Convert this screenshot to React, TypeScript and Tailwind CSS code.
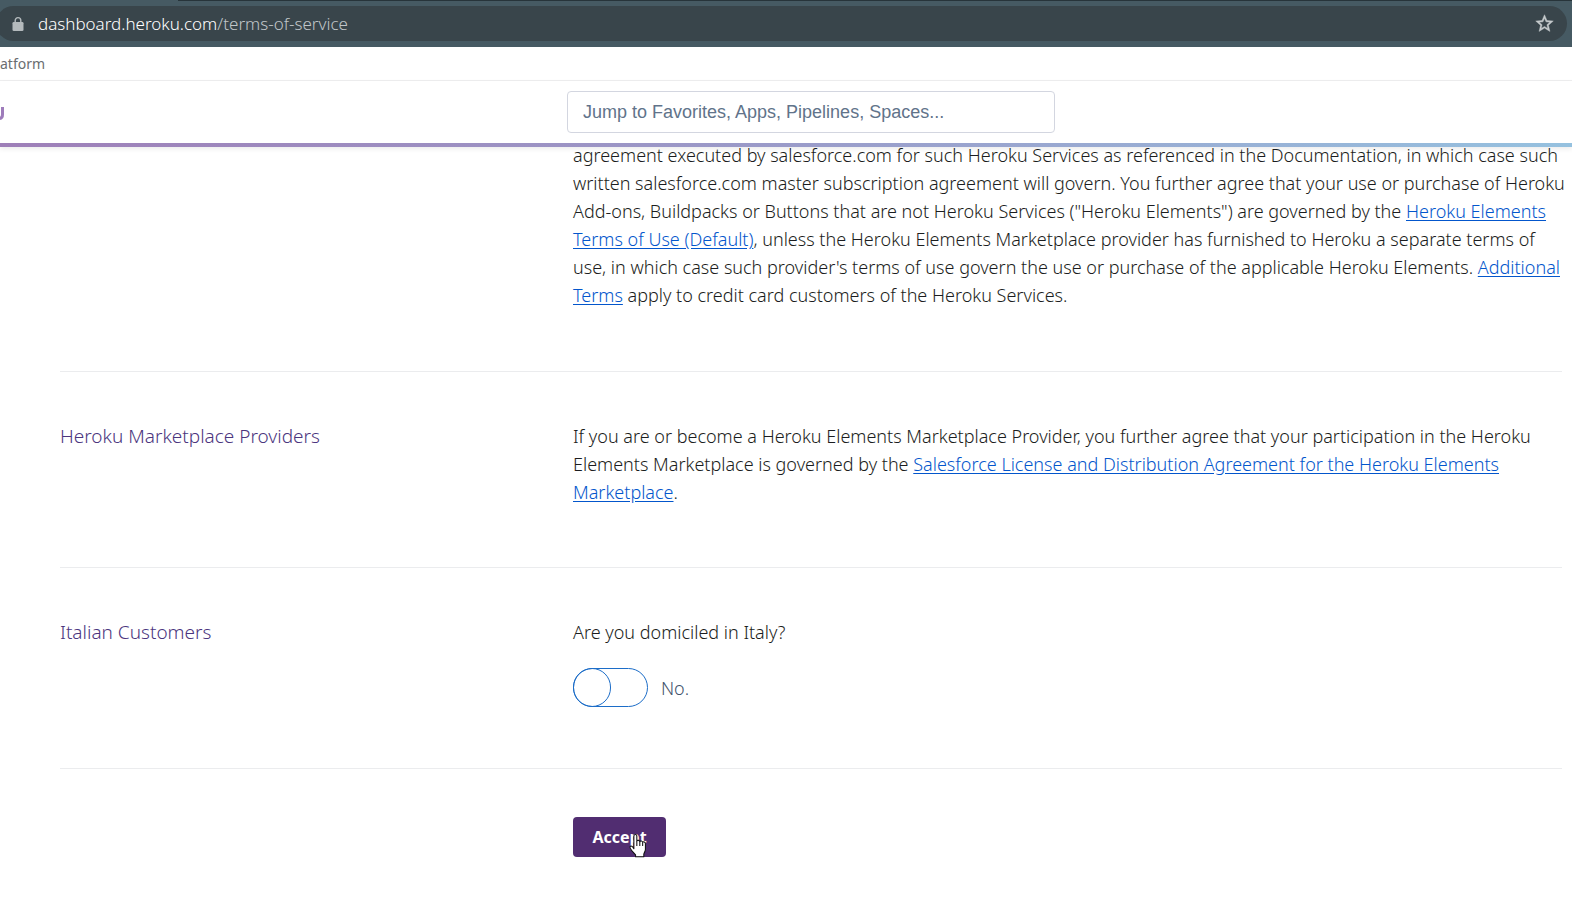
import { useState, type ReactNode } from "react";

function LockIcon() {
  return (
    <svg width="12" height="16" viewBox="0 0 12 16" aria-hidden="true" className="shrink-0">
      <path d="M3.2 6.5V4.4a2.8 2.8 0 0 1 5.6 0V6.5" fill="none" stroke="#b4babd" strokeWidth="1.4" />
      <rect x="0.5" y="6" width="11" height="9" rx="1.3" fill="#b4babd" />
    </svg>
  );
}

function StarIcon() {
  return (
    <svg width="21" height="21" viewBox="0 0 24 24" aria-hidden="true">
      <path
        d="M22 9.24l-7.19-.62L12 2 9.19 8.63 2 9.24l5.46 4.73L5.82 21 12 17.27 18.18 21l-1.63-7.03L22 9.24zM12 15.4l-3.76 2.27 1-4.28-3.32-2.88 4.38-.38L12 6.1l1.71 4.04 4.38.38-3.32 2.88 1 4.28L12 15.4z"
        fill="#c5cacc"
        stroke="#c5cacc"
        strokeWidth="0.5"
      />
    </svg>
  );
}

function HandCursor() {
  return (
    <svg
      width="18"
      height="25"
      viewBox="0 0 17 23"
      aria-hidden="true"
      className="pointer-events-none absolute top-4 left-14"
    >
      <path
        d="M4.6 14.6V2.6C4.6.5 7.4.5 7.4 2.6V7.4c.4-1.2 2.6-1 2.8.5.5-1.1 2.5-.8 2.7.7.6-1 2.6-.6 2.6 1.2v5.4c0 1.8-1.5 3.2-1.5 4.6v2.4H6.2v-1.9L2.6 16.3C1.3 14.6.5 13.5 1 12.6c.7-1.2 2.4-.5 3.6 2z"
        fill="#fff"
        stroke="#111"
        strokeWidth="1"
        strokeLinejoin="round"
      />
      <path d="M7.4 7.4v4.6M10.2 8v4M12.9 8.8V12" fill="none" stroke="#111" strokeWidth="1" />
    </svg>
  );
}

function TextLink({ children }: { children: ReactNode }) {
  return (
    <a href="#" className="text-[#0356cc] underline underline-offset-2">
      {children}
    </a>
  );
}

function Section({ title, children }: { title?: string; children: ReactNode }) {
  return (
    <section className="grid grid-cols-[513px_minmax(0,1fr)] border-b border-[#ebecee] pt-[50px] pb-[61px]">
      <h2 className="text-[19px] leading-7 text-[#4b357e]">{title}</h2>
      <div className="text-lg leading-7 whitespace-nowrap">{children}</div>
    </section>
  );
}

export default function App() {
  const [italy, setItaly] = useState(false);
  return (
    <div className="min-h-screen overflow-hidden bg-white font-['Noto_Sans',sans-serif] font-light text-[#1b1d20]">
      <div className="flex h-[47px] flex-col bg-[#465a63]">
        <div className="ml-[178px] h-px bg-[#27343a]" />
        <div className="mt-[5px] mr-[5px] -ml-1 flex h-[35px] items-center rounded-full bg-[#39454b] pr-3 pl-4">
          <LockIcon />
          <p className="ml-[14px] flex-1 text-[17px] text-[#c0c6c9]">
            <span className="text-white">dashboard.heroku.com</span>/terms-of-service
          </p>
          <button type="button" aria-label="Bookmark this page">
            <StarIcon />
          </button>
        </div>
      </div>

      <nav className="flex h-[34px] items-center border-b border-[#efeff0]">
        <a href="#" className="text-sm font-normal text-[#6a6d70]">
          atform
        </a>
      </nav>

      <header className="relative z-10 bg-white shadow-[0_2px_5px_rgba(0,0,0,0.08)]">
        <div className="flex h-[62px] items-center pr-[10px]">
          <div className="w-[60px] shrink-0">
            <svg width="5" height="14" viewBox="0 0 5 14" role="img" aria-label="Heroku" className="mt-1">
              <path d="M2.5 0V7.5C2.5 10.5 1 11.5 -1 11.5" fill="none" stroke="#9e7cbb" strokeWidth="3" />
            </svg>
          </div>
          <input
            type="search"
            aria-label="Jump to"
            placeholder="Jump to Favorites, Apps, Pipelines, Spaces..."
            className="mx-auto h-[42px] w-[488px] rounded-[4px] border border-[#d3d6e0] px-[15px] font-['Liberation_Sans',sans-serif] text-lg outline-none placeholder:text-[#61738a]"
          />
        </div>
        <div className="h-1 bg-linear-to-r from-[#9e7fb8] via-[#9a9bc9] to-[#95c1df]" />
      </header>

      <main className="mr-[10px] ml-[60px]">
        <section className="-mt-1.5 grid grid-cols-[513px_minmax(0,1fr)] border-b border-[#ebecee] pb-[62px]">
          <p className="col-start-2 text-lg leading-7 whitespace-nowrap">
            agreement executed by salesforce.com for such Heroku Services as referenced in the Documentation, in which
            case such
            <br />
            written salesforce.com master subscription agreement will govern. You further agree that your use or
            purchase of Heroku
            <br />
            Add-ons, Buildpacks or Buttons that are not Heroku Services ("Heroku Elements") are governed by the{" "}
            <TextLink>
              Heroku Elements
              <br />
              Terms of Use (Default)
            </TextLink>
            , unless the Heroku Elements Marketplace provider has furnished to Heroku a separate terms of
            <br />
            use, in which case such provider's terms of use govern the use or purchase of the applicable Heroku
            Elements.{" "}
            <TextLink>
              Additional
              <br />
              Terms
            </TextLink>{" "}
            apply to credit card customers of the Heroku Services.
          </p>
        </section>

        <Section title="Heroku Marketplace Providers">
          <p>
            If you are or become a Heroku Elements Marketplace Provider, you further agree that your participation in
            the Heroku
            <br />
            Elements Marketplace is governed by the{" "}
            <TextLink>
              Salesforce License and Distribution Agreement for the Heroku Elements
              <br />
              Marketplace
            </TextLink>
            .
          </p>
        </Section>

        <Section title="Italian Customers">
          <p>Are you domiciled in Italy?</p>
          <label className="mt-[22px] flex h-[39px] items-center gap-[13px] text-[#43536c]">
            <input
              type="checkbox"
              checked={italy}
              onChange={(e) => setItaly(e.target.checked)}
              className="relative h-[39px] w-[75px] appearance-none rounded-full border border-[#1c6dc8] bg-white before:absolute before:-top-px before:-left-px before:h-[39px] before:w-[38px] before:rounded-full before:border before:border-[#1c6dc8] checked:before:left-9"
            />
            {italy ? "Yes." : "No."}
          </label>
        </Section>

        <div className="pt-12 pl-[513px]">
          <button
            type="button"
            className="relative h-10 w-[93px] rounded-[4px] bg-[#512d71] text-base font-bold text-white"
          >
            Accept
            <HandCursor />
          </button>
        </div>
      </main>
    </div>
  );
}
